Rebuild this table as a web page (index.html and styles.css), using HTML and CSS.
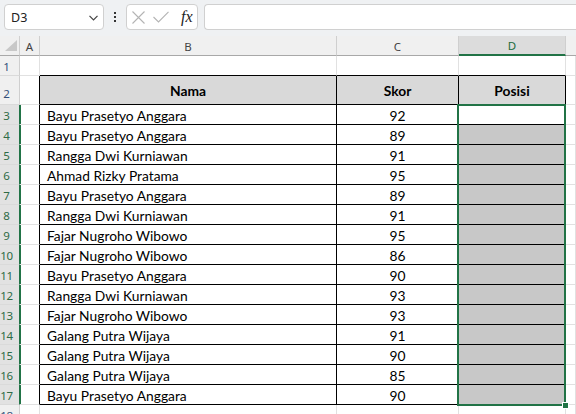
FILE: index.html
```html
<!DOCTYPE html>
<html>
<head>
<meta charset="utf-8">
<link rel="stylesheet" href="styles.css">
</head>
<body>
<div class="app">
  <div class="topbar">
    <div class="namebox">
      <span class="nb-text">D3</span>
      <svg class="chev" width="9" height="6" viewBox="0 0 9 6"><path d="M0.5 0.8 L4.5 4.8 L8.5 0.8" fill="none" stroke="#444" stroke-width="1.2"/></svg>
    </div>
    <div class="dots"><i></i><i></i><i></i></div>
    <div class="fxbox">
      <svg width="13" height="13" viewBox="0 0 13 13"><path d="M0.5 0.5 L12.5 12.5 M12.5 0.5 L0.5 12.5" stroke="#b4b4b4" stroke-width="1.1" fill="none"/></svg>
      <svg class="chk" width="16" height="12" viewBox="0 0 16 12"><path d="M0.5 6 L5.5 11 L15.5 0.8" stroke="#b4b4b4" stroke-width="1.1" fill="none"/></svg>
      <span class="fx">fx</span>
    </div>
    <div class="formula"></div>
  </div>

  <div class="sheet">
    <div class="row hrow">
      <div class="corner"><span class="tri"></span></div>
      <div class="ch">A</div>
      <div class="ch">B</div>
      <div class="ch">C</div>
      <div class="ch chsel">D</div>
      <div class="ch last"></div>
    </div>
    <div class="row">
      <div class="rh">1</div>
      <div class="c"></div>
      <div class="c tb"></div>
      <div class="c tb"></div>
      <div class="c tb"></div>
      <div class="c"></div>
    </div>
    <div class="row tall">
      <div class="rh">2</div>
      <div class="c ta"></div>
      <div class="c t th">Nama</div>
      <div class="c t th">Skor</div>
      <div class="c t th">Posisi</div>
      <div class="c"></div>
    </div>
    <div class="row"><div class="rh rs">3</div><div class="c ta"></div><div class="c t nm">Bayu Prasetyo Anggara</div><div class="c t sc">92</div><div class="c t"></div><div class="c"></div></div>
    <div class="row"><div class="rh rs">4</div><div class="c ta"></div><div class="c t nm">Bayu Prasetyo Anggara</div><div class="c t sc">89</div><div class="c t gr"></div><div class="c"></div></div>
    <div class="row"><div class="rh rs">5</div><div class="c ta"></div><div class="c t nm">Rangga Dwi Kurniawan</div><div class="c t sc">91</div><div class="c t gr"></div><div class="c"></div></div>
    <div class="row"><div class="rh rs">6</div><div class="c ta"></div><div class="c t nm">Ahmad Rizky Pratama</div><div class="c t sc">95</div><div class="c t gr"></div><div class="c"></div></div>
    <div class="row"><div class="rh rs">7</div><div class="c ta"></div><div class="c t nm">Bayu Prasetyo Anggara</div><div class="c t sc">89</div><div class="c t gr"></div><div class="c"></div></div>
    <div class="row"><div class="rh rs">8</div><div class="c ta"></div><div class="c t nm">Rangga Dwi Kurniawan</div><div class="c t sc">91</div><div class="c t gr"></div><div class="c"></div></div>
    <div class="row"><div class="rh rs">9</div><div class="c ta"></div><div class="c t nm">Fajar Nugroho Wibowo</div><div class="c t sc">95</div><div class="c t gr"></div><div class="c"></div></div>
    <div class="row"><div class="rh rs">10</div><div class="c ta"></div><div class="c t nm">Fajar Nugroho Wibowo</div><div class="c t sc">86</div><div class="c t gr"></div><div class="c"></div></div>
    <div class="row"><div class="rh rs">11</div><div class="c ta"></div><div class="c t nm">Bayu Prasetyo Anggara</div><div class="c t sc">90</div><div class="c t gr"></div><div class="c"></div></div>
    <div class="row"><div class="rh rs">12</div><div class="c ta"></div><div class="c t nm">Rangga Dwi Kurniawan</div><div class="c t sc">93</div><div class="c t gr"></div><div class="c"></div></div>
    <div class="row"><div class="rh rs">13</div><div class="c ta"></div><div class="c t nm">Fajar Nugroho Wibowo</div><div class="c t sc">93</div><div class="c t gr"></div><div class="c"></div></div>
    <div class="row"><div class="rh rs">14</div><div class="c ta"></div><div class="c t nm">Galang Putra Wijaya</div><div class="c t sc">91</div><div class="c t gr"></div><div class="c"></div></div>
    <div class="row"><div class="rh rs">15</div><div class="c ta"></div><div class="c t nm">Galang Putra Wijaya</div><div class="c t sc">90</div><div class="c t gr"></div><div class="c"></div></div>
    <div class="row"><div class="rh rs">16</div><div class="c ta"></div><div class="c t nm">Galang Putra Wijaya</div><div class="c t sc">85</div><div class="c t gr"></div><div class="c"></div></div>
    <div class="row"><div class="rh rs">17</div><div class="c ta"></div><div class="c t nm">Bayu Prasetyo Anggara</div><div class="c t sc">90</div><div class="c t gr"></div><div class="c"></div></div>
    <div class="row"><div class="rh">18</div><div class="c"></div><div class="c"></div><div class="c"></div><div class="c"></div><div class="c"></div></div>

    <div class="selection"><span class="handle"></span></div>
  </div>
</div>
</body>
</html>
```
FILE: styles.css
```css
* { box-sizing: border-box; }
html, body { margin: 0; padding: 0; }
body {
  width: 576px;
  height: 414px;
  overflow: hidden;
  background: #fff;
  font-family: "Lato", "Liberation Sans", sans-serif;
}
.app { display: flex; flex-direction: column; width: 576px; }

.topbar {
  height: 36px;
  background: #eff1f3;
  display: flex;
  align-items: flex-start;
  padding-top: 4px;
  padding-left: 4px;
}
.namebox {
  width: 100px;
  height: 26px;
  background: #fff;
  border: 1px solid #d0d0d0;
  border-radius: 4px;
  display: flex;
  align-items: center;
  padding-left: 6px;
  padding-right: 5px;
  font-family: "Noto Sans", "Open Sans", sans-serif;
  font-size: 12.5px;
  color: #222;
}
.nb-text { flex: 1; }
.chev { margin-top: 1px; }
.dots {
  width: 22px;
  height: 26px;
  display: flex;
  flex-direction: column;
  align-items: center;
  justify-content: center;
  gap: 2px;
}
.dots i { width: 2px; height: 2px; background: #333; display: block; }
.fxbox {
  width: 72px;
  height: 26px;
  background: #fff;
  border: 1px solid #d0d0d0;
  border-radius: 4px;
  display: flex;
  align-items: center;
  padding-left: 5px;
}
.chk { margin-left: 8px; }
.fx {
  margin-left: 12px;
  font-family: "Liberation Serif", "DejaVu Serif", serif;
  font-style: italic;
  font-size: 16px;
  color: #222;
  line-height: 1;
}
.formula {
  flex: 1;
  margin-left: 6px;
  height: 26px;
  background: #fff;
  border: 1px solid #d0d0d0;
  border-right: none;
  border-radius: 4px 0 0 4px;
}

.sheet { position: relative; }
.row {
  display: grid;
  grid-template-columns: 20px 20px 297px 122px 107px 1fr;
  height: 20px;
}
.row.tall { height: 29px; }

.hrow { background: #f0f0f0; }
.corner {
  position: relative;
  border-right: 1px solid #d0d0d0;
  border-bottom: 1px solid #a8a8a8;
}
.tri {
  position: absolute;
  left: 5px;
  top: 4px;
  width: 0;
  height: 0;
  border-left: 12px solid transparent;
  border-bottom: 11px solid #c8c8c8;
}
.ch {
  border-right: 1px solid #cfcfcf;
  border-bottom: 1px solid #a8a8a8;
  display: flex;
  align-items: center;
  justify-content: center;
  font-family: "Noto Sans", "Open Sans", sans-serif;
  font-size: 11.5px;
  color: #444;
  padding-top: 1px;
}
.ch.last { border-right: none; }
.chsel {
  background: #dcdcdc;
  color: #1d6b3c;
  border-bottom: 2px solid #217346;
}

.rh {
  background: #f0f0f0;
  border-right: 1px solid #cfcfcf;
  border-bottom: 1px solid #dadada;
  display: flex;
  align-items: center;
  justify-content: center;
  padding-right: 6px;
  font-family: "Noto Sans", "Open Sans", sans-serif;
  font-size: 11.5px;
  letter-spacing: -0.3px;
  color: #34507a;
  padding-top: 2px;
}
.row.tall .rh { align-items: flex-end; padding-bottom: 3px; }
.rh.rs {
  background: #e2e2e2;
  color: #2e6b45;
  border-right: 1px solid #217346;
  box-shadow: 1px 0 0 #217346;
}

.c {
  border-right: 1px solid #e1e1e1;
  border-bottom: 1px solid #e1e1e1;
  display: flex;
  align-items: center;
  font-size: 13.8px;
  color: #000;
  white-space: nowrap;
  padding-top: 1px;
}
.c.ta { border-right-color: #000; }
.c.tb { border-bottom-color: #000; }
.c.t { border-right-color: #000; border-bottom-color: #000; }
.c.th {
  background: #d9d9d9;
  font-weight: bold;
  justify-content: center;
}
.c.nm { padding-left: 7px; }
.c.sc { justify-content: center; }
.c.gr { background: #c8c8c8; }

.selection {
  position: absolute;
  left: 457px;
  top: 68px;
  width: 109px;
  height: 302px;
  border: 2px solid #217346;
  pointer-events: none;
}
.handle {
  position: absolute;
  right: -5px;
  bottom: -5px;
  width: 7px;
  height: 7px;
  background: #217346;
  border: 1px solid #fff;
}
```
